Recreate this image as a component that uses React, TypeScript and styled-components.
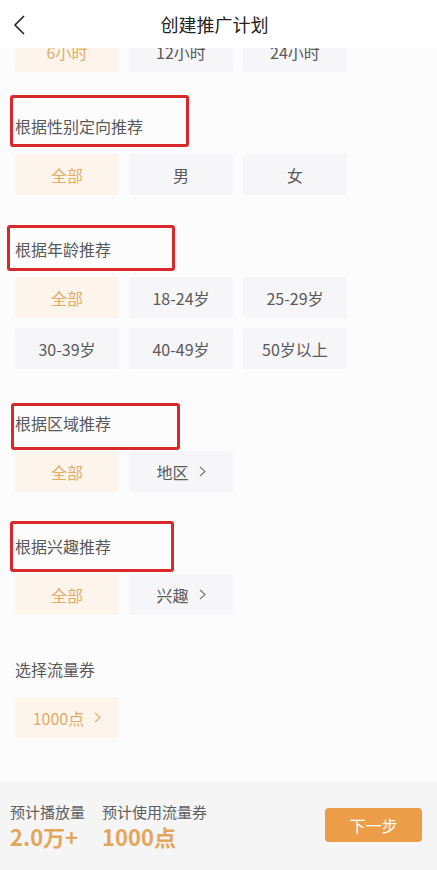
import styled, { createGlobalStyle } from "styled-components";

const GlobalStyle = createGlobalStyle`
  html, body {
    margin: 0;
    padding: 0;
    background: #fdfcfd;
  }
  body {
    font-family: "Noto Sans CJK SC", "Noto Sans", sans-serif;
  }
`;

const Page = styled.div`
  height: 870px;
  display: flex;
  flex-direction: column;
  background: #fdfcfd;
`;

const Header = styled.div`
  height: 48px;
  flex: none;
  display: flex;
  align-items: center;
  justify-content: center;
  padding-right: 8px;
  position: relative;
  background: #ffffff;
  z-index: 2;
`;

const BackButton = styled.div`
  position: absolute;
  left: 13px;
  top: 15px;
  width: 14px;
  height: 20px;
`;

const Title = styled.h1`
  margin: 0;
  font-size: 18px;
  font-weight: 400;
  color: #222;
  line-height: 24px;
`;

const Body = styled.div`
  flex: 1;
  overflow: hidden;
`;

const Content = styled.div`
  margin-top: -17px;
  padding: 0 15px;
  display: flex;
  flex-direction: column;
  gap: 42px;
`;

const Section = styled.div`
  display: flex;
  flex-direction: column;
  gap: 16px;
`;

const LabelWrap = styled.div`
  position: relative;
  height: 24px;
`;

const Label = styled.div`
  font-size: 16px;
  line-height: 24px;
  color: #595959;
`;

const Highlight = styled.div<{ $top: number; $left: number; $w: number; $h: number }>`
  position: absolute;
  top: ${(p) => p.$top}px;
  left: ${(p) => p.$left}px;
  width: ${(p) => p.$w}px;
  height: ${(p) => p.$h}px;
  box-sizing: border-box;
  border: 3px solid #d9282b;
  border-radius: 3px;
`;

const ChipGrid = styled.div`
  display: grid;
  grid-template-columns: repeat(3, 104px);
  gap: 10px;
`;

const Chip = styled.div<{ $active?: boolean }>`
  height: 41px;
  border-radius: 3px;
  display: flex;
  align-items: center;
  justify-content: center;
  gap: 10px;
  font-size: 16px;
  color: ${(p) => (p.$active ? "#e2ab66" : "#5a5a5a")};
  background: ${(p) => (p.$active ? "#fdf5ec" : "#f6f5f7")};
`;

const Footer = styled.div`
  height: 88px;
  flex: none;
  background: #f6f5f6;
  display: flex;
  align-items: center;
  justify-content: space-between;
  padding: 0 15px 0 10px;
`;

const Stats = styled.div`
  display: flex;
  gap: 17px;
`;

const Stat = styled.div`
  display: flex;
  flex-direction: column;
`;

const StatLabel = styled.div`
  font-size: 15px;
  line-height: 20px;
  color: #5e5e5e;
`;

const StatValue = styled.div`
  font-size: 22px;
  line-height: 28px;
  font-weight: 700;
  color: #e3a65b;
`;

const NextButton = styled.button`
  width: 97px;
  height: 34px;
  border: none;
  border-radius: 4px;
  background: #ec9d48;
  color: #fff;
  font-family: inherit;
  font-size: 16px;
  margin-top: -2px;
`;

function Chevron({ color }: { color: string }) {
  return (
    <svg width="7" height="11" viewBox="0 0 7 11">
      <path d="M1 1 L6 5.5 L1 10" fill="none" stroke={color} strokeWidth="1.1" />
    </svg>
  );
}

type Mark = { top: number; left: number; w: number; h: number };

function SectionLabel({ text, mark }: { text: string; mark?: Mark }) {
  return (
    <LabelWrap>
      <Label>{text}</Label>
      {mark && <Highlight $top={mark.top} $left={mark.left} $w={mark.w} $h={mark.h} />}
    </LabelWrap>
  );
}

export default function App() {
  return (
    <Page>
      <GlobalStyle />
      <Header>
        <BackButton>
          <svg width="14" height="20" viewBox="0 0 14 20">
            <path d="M11 1 L2 10 L11 19" fill="none" stroke="#222" strokeWidth="1.6" />
          </svg>
        </BackButton>
        <Title>创建推广计划</Title>
      </Header>
      <Body>
        <Content>
          <ChipGrid>
            <Chip $active>6小时</Chip>
            <Chip>12小时</Chip>
            <Chip>24小时</Chip>
          </ChipGrid>

          <Section>
            <SectionLabel text="根据性别定向推荐" mark={{ top: -19, left: -5, w: 179, h: 52 }} />
            <ChipGrid>
              <Chip $active>全部</Chip>
              <Chip>男</Chip>
              <Chip>女</Chip>
            </ChipGrid>
          </Section>

          <Section>
            <SectionLabel text="根据年龄推荐" mark={{ top: -12, left: -8, w: 168, h: 46 }} />
            <ChipGrid>
              <Chip $active>全部</Chip>
              <Chip>18-24岁</Chip>
              <Chip>25-29岁</Chip>
              <Chip>30-39岁</Chip>
              <Chip>40-49岁</Chip>
              <Chip>50岁以上</Chip>
            </ChipGrid>
          </Section>

          <Section>
            <SectionLabel text="根据区域推荐" mark={{ top: -8, left: -4, w: 169, h: 47 }} />
            <ChipGrid>
              <Chip $active>全部</Chip>
              <Chip>
                地区
                <Chevron color="#777" />
              </Chip>
            </ChipGrid>
          </Section>

          <Section>
            <SectionLabel text="根据兴趣推荐" mark={{ top: -13, left: -5, w: 164, h: 51 }} />
            <ChipGrid>
              <Chip $active>全部</Chip>
              <Chip>
                兴趣
                <Chevron color="#777" />
              </Chip>
            </ChipGrid>
          </Section>

          <Section>
            <SectionLabel text="选择流量券" />
            <ChipGrid>
              <Chip $active>
                1000点
                <Chevron color="#e2ab66" />
              </Chip>
            </ChipGrid>
          </Section>
        </Content>
      </Body>
      <Footer>
        <Stats>
          <Stat>
            <StatLabel>预计播放量</StatLabel>
            <StatValue>2.0万+</StatValue>
          </Stat>
          <Stat>
            <StatLabel>预计使用流量券</StatLabel>
            <StatValue>1000点</StatValue>
          </Stat>
        </Stats>
        <NextButton>下一步</NextButton>
      </Footer>
    </Page>
  );
}
